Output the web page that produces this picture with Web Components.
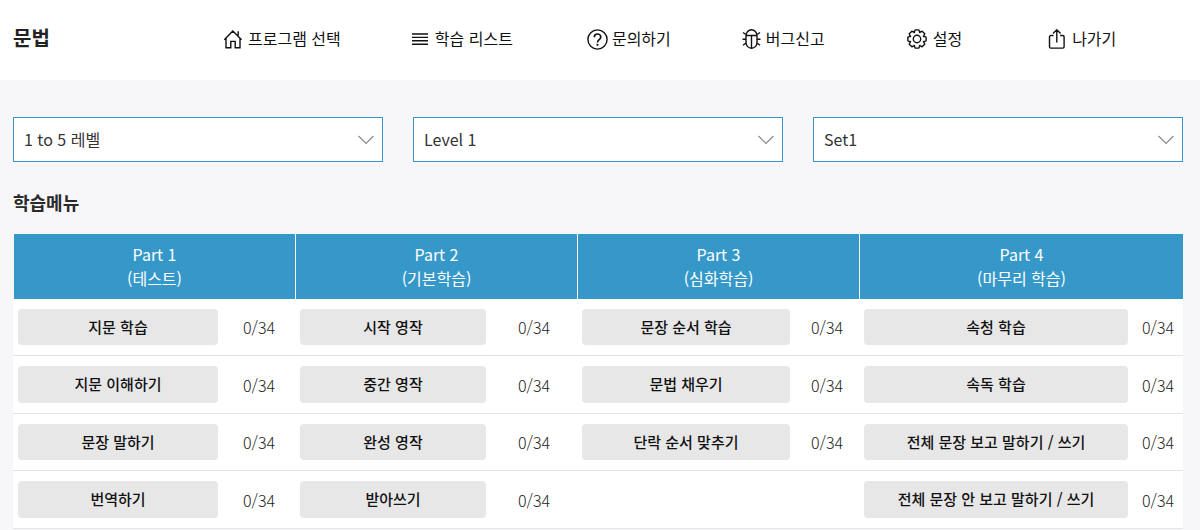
<!DOCTYPE html>
<html lang="ko"><head><meta charset="utf-8"><title>문법</title>
<style>
html,body{margin:0;padding:0;background:#f7f7fa;height:530px;overflow:hidden}
body{font-family:"Noto Sans CJK KR","Noto Sans",sans-serif;color:#212529}
</style></head><body>
<grammar-page></grammar-page>
<template id="t-page"><style>
:host{display:block}
.top{height:80px;background:#fff;display:flex;align-items:center;padding-left:13px;box-sizing:border-box}
.logo{font-size:20px;font-weight:700;width:210px;line-height:24px;margin-top:-4px;color:#222}
nav{display:flex;align-items:center;margin-top:-2px}
.body{padding:37px 17px 0 13px}
.sel{display:flex;gap:30px}
h2{margin:27px 0 0;font-size:18px;line-height:26px;font-weight:700;color:#2a2a2a;height:45px}
.tbl{background:#fff}
</style>
<div class="top"><div class="logo">문법</div><nav>
<nav-item label="프로그램 선택" gap="0" icon="home"></nav-item>
<nav-item label="학습 리스트" gap="71" icon="list"></nav-item>
<nav-item label="문의하기" gap="74" icon="help"></nav-item>
<nav-item label="버그신고" gap="71" icon="bug"></nav-item>
<nav-item label="설정" gap="82" icon="gear"></nav-item>
<nav-item label="나가기" gap="85" icon="share"></nav-item>
</nav></div>
<div class="body">
<div class="sel"><level-select>1 to 5 레벨</level-select><level-select>Level 1</level-select><level-select>Set1</level-select></div>
<h2>학습메뉴</h2>
<div class="tbl">
<table-head></table-head>
<menu-row cells='[["지문 학습"],["시작 영작"],["문장 순서 학습"],["속청 학습"]]'></menu-row>
<menu-row cells='[["지문 이해하기"],["중간 영작"],["문법 채우기"],["속독 학습"]]'></menu-row>
<menu-row cells='[["문장 말하기"],["완성 영작"],["단락 순서 맞추기"],["전체 문장 보고 말하기 / 쓰기"]]'></menu-row>
<menu-row cells='[["번역하기"],["받아쓰기"],null,["전체 문장 안 보고 말하기 / 쓰기"]]'></menu-row>
</div></div>
</template>
<script>
function gearPath(){let d='';const c=10,R=9.3,r=7;for(let i=0;i<8;i++){const a=i*Math.PI/4-Math.PI/2;const pts=[[r,-.42],[R,-.2],[R,.2],[r,.42]];pts.forEach((p,j)=>{const x=c+p[0]*Math.cos(a+p[1]),y=c+p[0]*Math.sin(a+p[1]);d+=(i===0&&j===0?'M':'L')+x.toFixed(2)+' '+y.toFixed(2)})}return d+'Z'}
const S='fill="none" stroke="#111" stroke-width="1.4"';
const ICONS={
home:`<svg width="20" height="20" viewBox="0 0 20 20" ${S}><path d="M1.300 10.800 9.800 2l8.800 8.800M3 9.200V18.800h4.800v-6.400h4.400v6.400h4.800V9.200M15.200 2.200V6.600" /></svg>`,
list:`<svg width="20" height="20" viewBox="0 0 20 20" ${S}><path d="M0 5h16M0 8.400h16M0 11.800h16M0 15.200h16"/></svg>`,
help:`<svg width="21" height="21" viewBox="0 0 21 21" ${S}><circle cx="10.500" cy="10.500" r="9.600"/><path d="M7.300 8.200C7.300 6.200 8.800 5 10.500 5s3.300 1.200 3.300 3c0 2.600-3.300 2.700-3.300 5.400" stroke-width="1.700"/><circle cx="10.500" cy="15.800" r="1.100" fill="#111" stroke="none"/></svg>`,
bug:`<svg width="20" height="20" viewBox="0 0 20 20" ${S}><path d="M4 7C4 3.500 6.500 .8 9.500 .8S15 3.500 15 7v6.800c0 3-2.400 5.400-5.500 5.400S4 16.800 4 13.800z"/><path d="M4 6.500h11M9.500 6.500v12.700M4 5.500 1 3.500M15 5.500l3-2M4 10.200H.5M15 10.200h3.500M4 14 1 16.200M15 14l3 2.200"/></svg>`,
gear:`<svg width="20" height="20" viewBox="0 0 20 20" ${S} stroke-linejoin="round"><circle cx="10" cy="10" r="3.700"/><path d="${gearPath()}"/></svg>`,
share:`<svg width="20" height="20" viewBox="0 0 20 20" ${S}><path d="M6.500 6.500H3.800a1.300 1.300 0 0 0-1.300 1.300v10a1.300 1.300 0 0 0 1.300 1.300h12a1.300 1.300 0 0 0 1.300-1.300v-10a1.300 1.300 0 0 0-1.300-1.300h-2.700M9.800 13.500V.9M6 4.600 9.800.8l3.800 3.800"/></svg>`};
const ICON_GAP={home:5,list:3,help:4,bug:4,gear:6,share:5};
function define(name,render){customElements.define(name,class extends HTMLElement{connectedCallback(){if(this.shadowRoot)return;const s=this.attachShadow({mode:'open'});render(s,this)}})}
define('grammar-page',s=>{s.appendChild(document.getElementById('t-page').content.cloneNode(true))});
define('nav-item',(s,h)=>{const ic=h.getAttribute('icon');
s.innerHTML=`<style>:host{display:flex;align-items:center;margin-left:${h.getAttribute('gap')}px;font-size:16px;line-height:24px;color:#111}svg{display:block;flex:none;margin-right:${ICON_GAP[ic]}px}span{white-space:nowrap;margin-top:-2px}</style>${ICONS[ic]}<span>${h.getAttribute('label')}</span>`});
define('level-select',s=>{s.innerHTML=`<style>:host{display:flex;align-items:center;justify-content:space-between;box-sizing:border-box;width:370px;height:45px;background:#fff;border:1px solid #3598c9;padding:0 8px 0 10px;font-size:16px;color:#333}span{margin-top:-2px}svg{display:block}</style><span><slot></slot></span><svg width="16" height="10" viewBox="0 0 16 10" fill="none" stroke="#888" stroke-width="1.1"><path d="M.5 1 8 8.500 15.500 1"/></svg>`});
define('table-head',s=>{const p=[["Part 1","(테스트)"],["Part 2","(기본학습)"],["Part 3","(심화학습)"],["Part 4","(마무리 학습)"]];
s.innerHTML=`<style>:host{display:grid;grid-template-columns:282px 282px 282px 323px;height:64.5px;padding-left:1px;background:#f7f7fa;box-sizing:border-box}div{background:#3598c9;color:#fff;font-size:16px;font-weight:400;line-height:24px;text-align:center;padding-top:8px;box-sizing:border-box;border-right:1px solid #fff}div:last-child{border-right:0}</style>`+p.map(x=>`<div>${x[0]}<br>${x[1]}</div>`).join('')});
const W=[200,186,208,264],M=[25,32,21,14];
define('menu-row',(s,h)=>{const c=JSON.parse(h.getAttribute('cells'));
s.innerHTML=`<style>:host{display:grid;grid-template-columns:282px 282px 282px 1fr;height:57.5px;box-sizing:border-box;border-bottom:1px solid #e2e2e8;padding-left:5px;padding-top:10px}</style>`+c.map((x,i)=>x?`<menu-cell w="${W[i]}" m="${M[i]}" t="${x[0]}"></menu-cell>`:'<i></i>').join('')});
define('menu-cell',(s,h)=>{s.innerHTML=`<style>:host{display:flex;align-items:center;height:36.500px}button{all:unset;box-sizing:border-box;width:${h.getAttribute('w')}px;height:36.500px;background:#e7e7e7;border-radius:4px;text-align:center;font:500 15px/34px "Noto Sans CJK KR",sans-serif;color:#111}span{margin-left:${h.getAttribute('m')}px;margin-top:1px;font-size:16px;font-weight:300;color:#222}</style><button>${h.getAttribute('t')}</button><span>0/34</span>`});
</script>
</body></html>
